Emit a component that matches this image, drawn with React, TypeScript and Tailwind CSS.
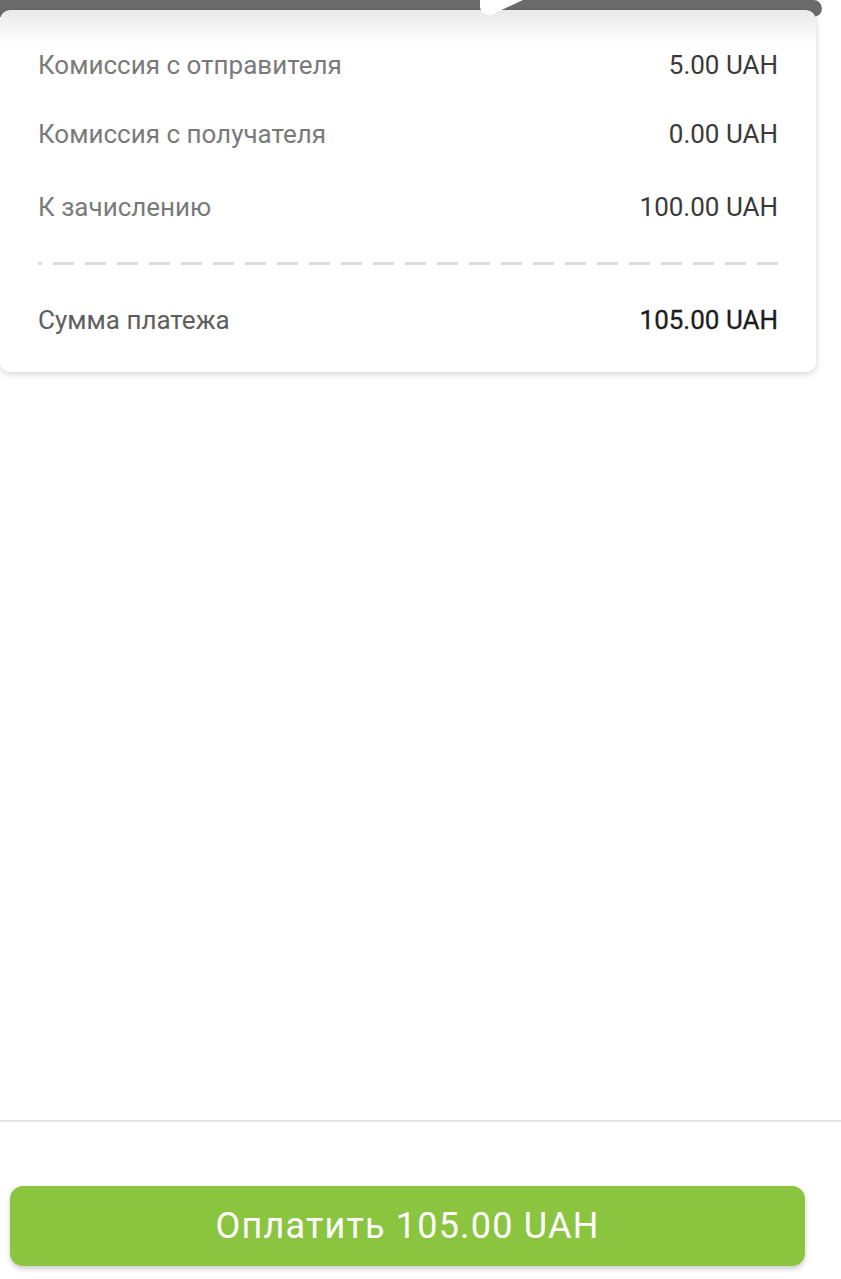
import React from "react";

const rows = [
    { label: "Комиссия с отправителя", value: "5.00 UAH", gap: "mt-0" },
    { label: "Комиссия с получателя", value: "0.00 UAH", gap: "mt-[29px]" },
    { label: "К зачислению", value: "100.00 UAH", gap: "mt-[33px]" },
];

const App: React.FC = () => {
    return (
        <div className="w-[841px] h-[1279px] bg-white flex flex-col font-['Roboto','Liberation_Sans',sans-serif] overflow-hidden">
            <div className="relative w-[816px]">
                {/* dark strip behind the card */}
                <div className="h-[17px] w-[822px] bg-[#6b6b6b] rounded-r-[9px]" />

                <div className="-mt-[7px] relative rounded-[10px] bg-[linear-gradient(to_bottom,#e9e9e9,#ffffff_34px)] shadow-[0_2px_6px_rgba(0,0,0,0.18)] px-[38px] pt-[35px] pb-[32px]">
                    {rows.map((row) => (
                        <div key={row.label} className={`${row.gap} h-10 flex items-center justify-between text-[26px]`}>
                            <span className="text-[#7a7a7a]">{row.label}</span>
                            <span className="text-[#3a3a3a]">{row.value}</span>
                        </div>
                    ))}

                    <div className="mt-[35px] h-[3px] bg-[repeating-linear-gradient(to_right,#dcdcdc_0px,#dcdcdc_21px,transparent_21px,transparent_32px)] bg-[position:-17px_0]" />

                    <div className="mt-[35px] h-10 flex items-center justify-between text-[26px]">
                        <span className="text-[#5e5e5e]">Сумма платежа</span>
                        <span className="text-[#1c1c1c] [-webkit-text-stroke:0.3px_#1c1c1c]">105.00 UAH</span>
                    </div>
                </div>

                {/* pointer notch */}
                <svg className="absolute top-0 left-[478px]" width="48" height="18" viewBox="0 0 48 18">
                    <path d="M2 0 L2 7 Q3 16 13 15 Q16 14 19 12 L45 0 Z" fill="#ffffff" />
                </svg>
            </div>

            <div className="flex-1" />

            <div className="h-[2px] bg-[#e4e4e4]" />

            <div className="pt-[64px] pb-[13px] pl-[10px]">
                <button className="w-[795px] h-[80px] rounded-[13px] bg-[#8bc540] shadow-[0_3px_5px_rgba(0,0,0,0.2)] text-white text-[36px] tracking-[1.2px]">
                    Оплатить 105.00 UAH
                </button>
            </div>
        </div>
    );
};

export default App;
